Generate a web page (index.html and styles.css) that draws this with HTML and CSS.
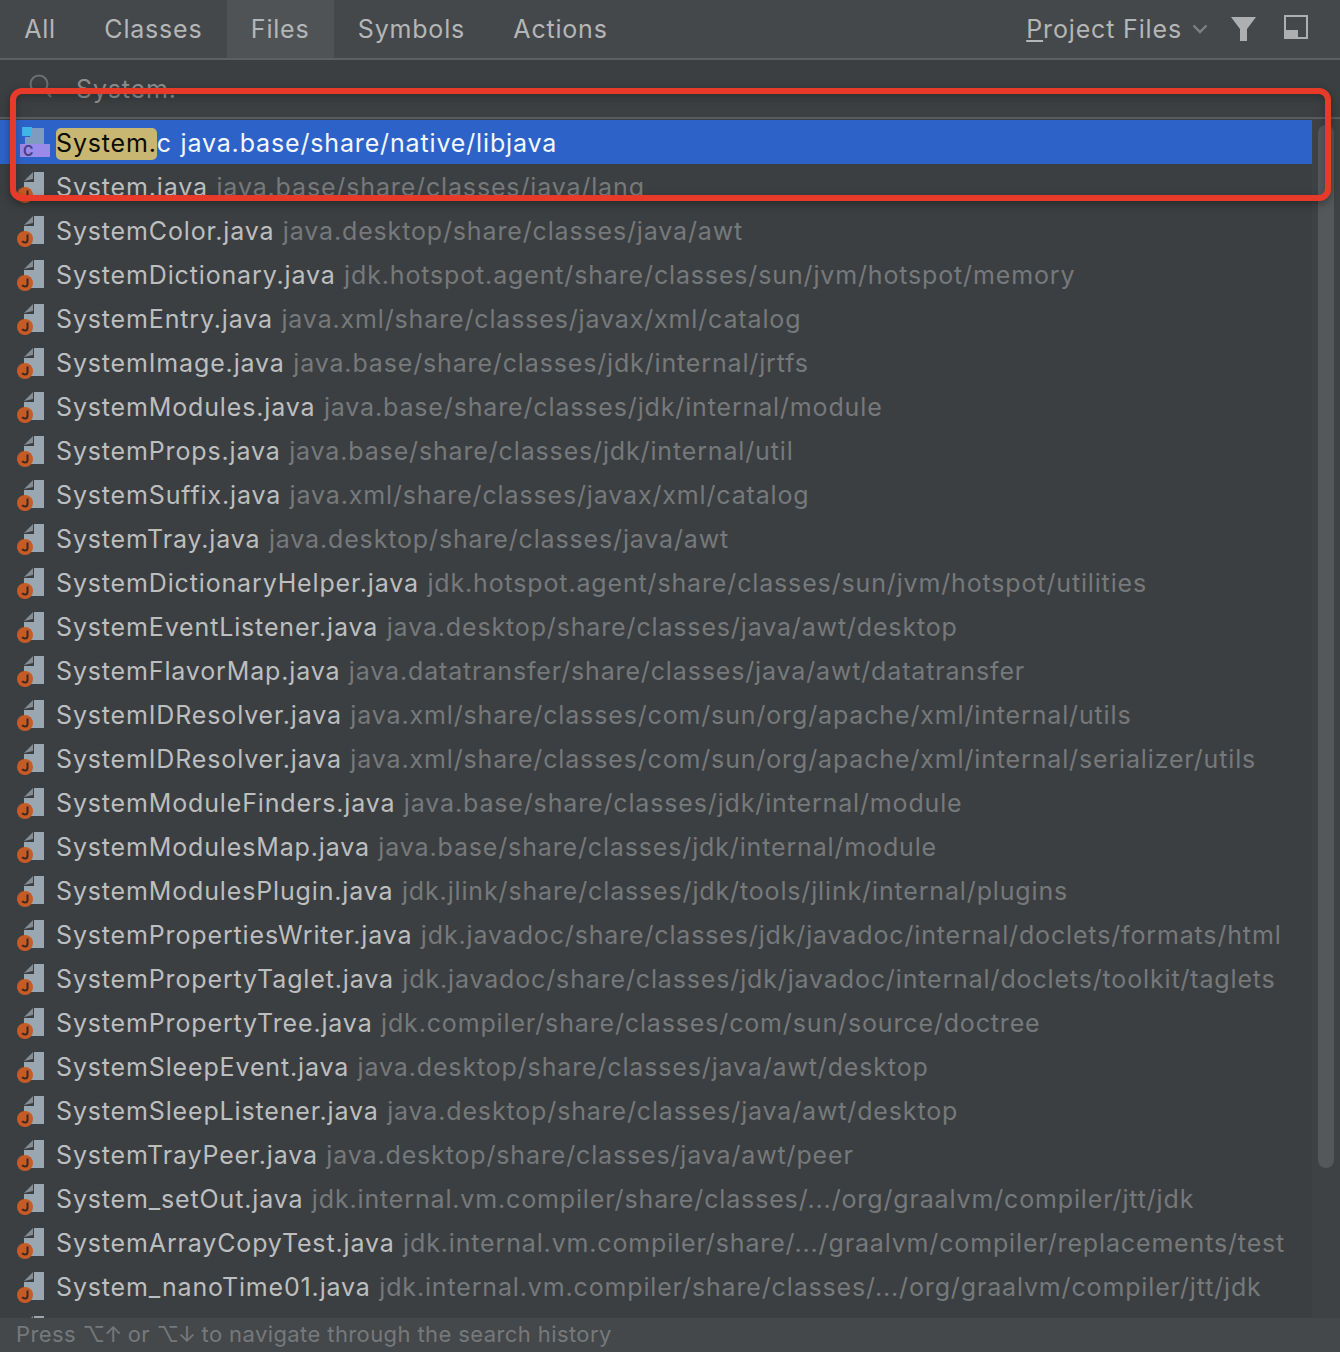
FILE: index.html
```html
<!DOCTYPE html>
<html lang="en">
<head>
<meta charset="utf-8">
<title>Search Everywhere</title>
<link rel="stylesheet" href="styles.css">
</head>
<body>
<svg class="defs" width="0" height="0" aria-hidden="true">
  <symbol id="java" viewBox="0 0 50 44">
    <path d="M24 17 L33 8 V15 Z" fill="#9aa7b0" opacity=".75"/>
    <path d="M34 8 H44 V36 H24 V18 H34 Z" fill="#9aa7b0"/>
    <circle cx="25" cy="31" r="8" fill="#c75b26"/>
    <path d="M27.500 26.500 V32 Q27.500 34.500 25 34.500 Q23 34.500 22.300 32.800" fill="none" stroke="#3b2a20" stroke-width="2"/>
  </symbol>
</svg>
<main class="popup">
  <header class="tabs">
    <nav class="tab-list">
      <span class="tab">All</span>
      <span class="tab">Classes</span>
      <span class="tab active">Files</span>
      <span class="tab">Symbols</span>
      <span class="tab">Actions</span>
    </nav>
    <div class="tools">
      <span class="scope"><u>P</u>roject Files</span>
      <svg class="chev" width="16" height="10" viewBox="0 0 16 10"><path d="M1.500 1.500 L8 8 L14.500 1.500" fill="none" stroke="#7c8083" stroke-width="2.400"/></svg>
      <svg class="funnel" width="26" height="24" viewBox="0 0 26 24"><path d="M0 0 H25 L16 12 V24 H9 V12 Z" fill="#adafb1"/></svg>
      <svg class="pin" width="24" height="24" viewBox="0 0 24 24"><path d="M1 1 H23 V23 H1 Z" fill="none" stroke="#adafb1" stroke-width="2"/><rect x="1" y="15" width="13" height="8" fill="#adafb1"/></svg>
    </div>
  </header>
  <div class="search">
    <svg class="lens" width="26" height="26" viewBox="0 0 26 26"><circle cx="12" cy="10" r="8.500" fill="none" stroke="#6d7072" stroke-width="2"/><path d="M18 16 L24 23" stroke="#6d7072" stroke-width="2.400"/></svg>
    <span class="query">System.</span>
  </div>
  <section class="results">
    <ul class="list">
      <li class="row selected">
        <svg class="ico" width="50" height="44" viewBox="0 0 50 44">
          <path d="M30 8 H44 V24 H25 V17 H30 Z" fill="#7f9cc0"/>
          <rect x="22" y="7" width="10" height="9" fill="#3fb6e6"/>
          <rect x="20" y="24" width="30" height="13" fill="#9a8bea"/>
          <text x="23" y="36" class="c-letter">C</text>
        </svg>
        <span class="name"><mark>System.</mark>c</span><span class="path">java.base/share/native/libjava</span>
      </li>
      <li class="row"><svg class="ico" width="50" height="44"><use href="#java"/></svg><span class="name">System.java</span><span class="path">java.base/share/classes/java/lang</span></li>
      <li class="row"><svg class="ico" width="50" height="44"><use href="#java"/></svg><span class="name">SystemColor.java</span><span class="path">java.desktop/share/classes/java/awt</span></li>
      <li class="row"><svg class="ico" width="50" height="44"><use href="#java"/></svg><span class="name">SystemDictionary.java</span><span class="path">jdk.hotspot.agent/share/classes/sun/jvm/hotspot/memory</span></li>
      <li class="row"><svg class="ico" width="50" height="44"><use href="#java"/></svg><span class="name">SystemEntry.java</span><span class="path">java.xml/share/classes/javax/xml/catalog</span></li>
      <li class="row"><svg class="ico" width="50" height="44"><use href="#java"/></svg><span class="name">SystemImage.java</span><span class="path">java.base/share/classes/jdk/internal/jrtfs</span></li>
      <li class="row"><svg class="ico" width="50" height="44"><use href="#java"/></svg><span class="name">SystemModules.java</span><span class="path">java.base/share/classes/jdk/internal/module</span></li>
      <li class="row"><svg class="ico" width="50" height="44"><use href="#java"/></svg><span class="name">SystemProps.java</span><span class="path">java.base/share/classes/jdk/internal/util</span></li>
      <li class="row"><svg class="ico" width="50" height="44"><use href="#java"/></svg><span class="name">SystemSuffix.java</span><span class="path">java.xml/share/classes/javax/xml/catalog</span></li>
      <li class="row"><svg class="ico" width="50" height="44"><use href="#java"/></svg><span class="name">SystemTray.java</span><span class="path">java.desktop/share/classes/java/awt</span></li>
      <li class="row"><svg class="ico" width="50" height="44"><use href="#java"/></svg><span class="name">SystemDictionaryHelper.java</span><span class="path">jdk.hotspot.agent/share/classes/sun/jvm/hotspot/utilities</span></li>
      <li class="row"><svg class="ico" width="50" height="44"><use href="#java"/></svg><span class="name">SystemEventListener.java</span><span class="path">java.desktop/share/classes/java/awt/desktop</span></li>
      <li class="row"><svg class="ico" width="50" height="44"><use href="#java"/></svg><span class="name">SystemFlavorMap.java</span><span class="path">java.datatransfer/share/classes/java/awt/datatransfer</span></li>
      <li class="row"><svg class="ico" width="50" height="44"><use href="#java"/></svg><span class="name">SystemIDResolver.java</span><span class="path">java.xml/share/classes/com/sun/org/apache/xml/internal/utils</span></li>
      <li class="row"><svg class="ico" width="50" height="44"><use href="#java"/></svg><span class="name">SystemIDResolver.java</span><span class="path">java.xml/share/classes/com/sun/org/apache/xml/internal/serializer/utils</span></li>
      <li class="row"><svg class="ico" width="50" height="44"><use href="#java"/></svg><span class="name">SystemModuleFinders.java</span><span class="path">java.base/share/classes/jdk/internal/module</span></li>
      <li class="row"><svg class="ico" width="50" height="44"><use href="#java"/></svg><span class="name">SystemModulesMap.java</span><span class="path">java.base/share/classes/jdk/internal/module</span></li>
      <li class="row"><svg class="ico" width="50" height="44"><use href="#java"/></svg><span class="name">SystemModulesPlugin.java</span><span class="path">jdk.jlink/share/classes/jdk/tools/jlink/internal/plugins</span></li>
      <li class="row"><svg class="ico" width="50" height="44"><use href="#java"/></svg><span class="name">SystemPropertiesWriter.java</span><span class="path">jdk.javadoc/share/classes/jdk/javadoc/internal/doclets/formats/html</span></li>
      <li class="row"><svg class="ico" width="50" height="44"><use href="#java"/></svg><span class="name">SystemPropertyTaglet.java</span><span class="path">jdk.javadoc/share/classes/jdk/javadoc/internal/doclets/toolkit/taglets</span></li>
      <li class="row"><svg class="ico" width="50" height="44"><use href="#java"/></svg><span class="name">SystemPropertyTree.java</span><span class="path">jdk.compiler/share/classes/com/sun/source/doctree</span></li>
      <li class="row"><svg class="ico" width="50" height="44"><use href="#java"/></svg><span class="name">SystemSleepEvent.java</span><span class="path">java.desktop/share/classes/java/awt/desktop</span></li>
      <li class="row"><svg class="ico" width="50" height="44"><use href="#java"/></svg><span class="name">SystemSleepListener.java</span><span class="path">java.desktop/share/classes/java/awt/desktop</span></li>
      <li class="row"><svg class="ico" width="50" height="44"><use href="#java"/></svg><span class="name">SystemTrayPeer.java</span><span class="path">java.desktop/share/classes/java/awt/peer</span></li>
      <li class="row"><svg class="ico" width="50" height="44"><use href="#java"/></svg><span class="name">System_setOut.java</span><span class="path">jdk.internal.vm.compiler/share/classes/.../org/graalvm/compiler/jtt/jdk</span></li>
      <li class="row"><svg class="ico" width="50" height="44"><use href="#java"/></svg><span class="name">SystemArrayCopyTest.java</span><span class="path">jdk.internal.vm.compiler/share/.../graalvm/compiler/replacements/test</span></li>
      <li class="row"><svg class="ico" width="50" height="44"><use href="#java"/></svg><span class="name">System_nanoTime01.java</span><span class="path">jdk.internal.vm.compiler/share/classes/.../org/graalvm/compiler/jtt/jdk</span></li>
      <li class="row"><svg class="ico" width="50" height="44"><use href="#java"/></svg></li>
    </ul>
    <div class="gutter"><div class="thumb"></div></div>
  </section>
  <footer class="status">Press <span class="sym">⌥↑</span> or <span class="sym">⌥↓</span> to navigate through the search history</footer>
</main>
<div class="annotation"></div>
</body>
</html>
```

FILE: styles.css
```css
* { box-sizing: border-box; }
html, body { margin: 0; padding: 0; }
body {
  width: 1340px;
  height: 1352px;
  overflow: hidden;
  background: #3c3f41;
  font-family: Inter, "Liberation Sans", sans-serif;
  font-size: 25px;
  letter-spacing: 0.85px;
  color: #babcbd;
  position: relative;
}
.defs { position: absolute; }
.popup { display: flex; flex-direction: column; height: 1352px; }

.tabs {
  height: 60px;
  flex: none;
  display: flex;
  justify-content: space-between;
  background: #45484a;
  border-bottom: 2px solid #5d6062;
}
.tab-list { display: flex; }
.tab {
  padding: 0 24.200px;
  display: flex;
  align-items: center;
  color: #b4b6b7;
  letter-spacing: 0.8px;
}
.tab.active { background: #4f5355; }
.tools {
  display: flex;
  align-items: center;
  padding-right: 32px;
  color: #b4b6b7;
}
.chev { margin-left: 10px; }
.funnel { margin-left: 23px; margin-top: 0; }
.pin { margin-left: 27px; margin-top: -4px; }

.search {
  height: 59px;
  flex: none;
  display: flex;
  align-items: center;
  padding-left: 27px;
  border-bottom: 2px solid #595c5e;
  color: #8b8e90;
}
.query { margin-left: 23px; }
.lens { margin-top: -3px; }

.results {
  flex: 1;
  min-height: 0;
  position: relative;
  overflow: hidden;
  padding-top: 1px;
}
.list { list-style: none; margin: 0; padding: 0; width: 1312px; }
.row {
  height: 44px;
  display: flex;
  align-items: center;
  white-space: pre;
  padding-top: 2px;
}
.ico { flex: none; margin-right: 6px; margin-top: -2px; }
.name { color: #bcbebf; margin-right: 8.500px; }
.path { color: #76797b; }
.selected { background: #2d63c8; }
.selected .name, .selected .path { color: #f4f7fc; }
mark {
  background: #c8b772;
  color: #0c0c06;
  border-radius: 5px;
  padding: 0 0 2px;
}
.c-letter {
  font-size: 14px;
  font-weight: 700;
  fill: #4a3f86;
  letter-spacing: 0;
}
.gutter {
  position: absolute;
  top: 0;
  right: 0;
  bottom: 0;
  width: 28px;
  background: #3f4244;
  padding: 6px 6px 0 6px;
}
.thumb {
  width: 16px;
  height: 1043px;
  border-radius: 8px;
  background: #55585a;
}

.status {
  height: 34px;
  flex: none;
  background: #45484a;
  color: #76797b;
  font-size: 22px;
  letter-spacing: 0.4px;
  line-height: 32px;
  padding-left: 16px;
  white-space: pre;
}
.sym { font-family: Inter, "DejaVu Sans", sans-serif; font-size: 22px; letter-spacing: -1.200px; }

.annotation {
  position: absolute;
  left: 10px;
  top: 88px;
  width: 1321px;
  height: 113px;
  border: 6px solid #e83a28;
  border-radius: 12px;
  box-shadow: 0 3px 8px rgba(0,0,0,.35), inset 0 3px 8px rgba(0,0,0,.25);
  pointer-events: none;
}
```
